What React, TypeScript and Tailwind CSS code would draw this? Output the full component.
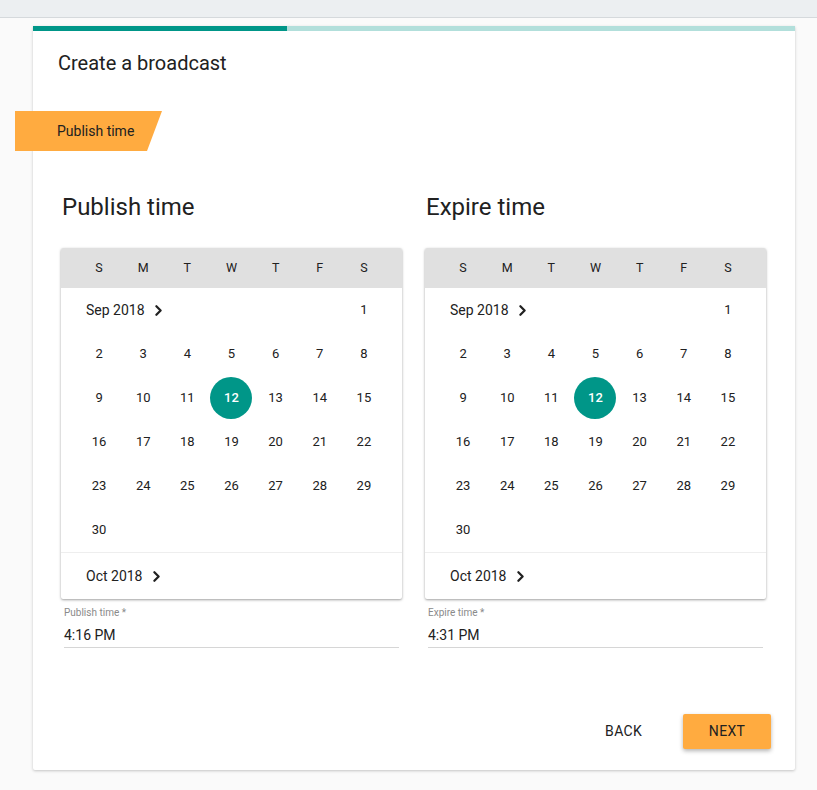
import { ChevronRight } from "lucide-react";

const WEEKDAYS = ["S", "M", "T", "W", "T", "F", "S"];

// Sep 2018 starts on a Saturday
const SEP_WEEKS: (number | null)[][] = [
  [null, null, null, null, null, null, 1],
  [2, 3, 4, 5, 6, 7, 8],
  [9, 10, 11, 12, 13, 14, 15],
  [16, 17, 18, 19, 20, 21, 22],
  [23, 24, 25, 26, 27, 28, 29],
  [30, null, null, null, null, null, null],
];

function MonthLabel({ label }: { label: string }) {
  return (
    <div className="flex items-center gap-[5px] text-[14px] text-[#212121]">
      <span>{label}</span>
      <ChevronRight size={17} strokeWidth={3.2} className="text-[#212121]" />
    </div>
  );
}

function Calendar({ selected }: { selected: number }) {
  return (
    <div className="w-[341px] bg-white rounded-[2px] shadow-[0_1px_3px_rgba(0,0,0,0.25),0_1px_2px_rgba(0,0,0,0.15)] overflow-hidden">
      <div className="h-10 bg-[#e0e0e0] px-4 grid grid-cols-7 items-center text-[12.5px] text-[#212121]">
        {WEEKDAYS.map((d, i) => (
          <span key={i} className="text-center">
            {d}
          </span>
        ))}
      </div>
      <div className="px-4">
        {SEP_WEEKS.map((week, wi) => (
          <div key={wi} className="relative grid grid-cols-7 h-11 items-center text-[13px] text-[#212121]">
            {wi === 0 && (
              <div className="absolute left-[9px] top-0 h-11 flex items-center">
                <MonthLabel label="Sep 2018" />
              </div>
            )}
            {week.map((d, di) => (
              <div key={di} className="flex items-center justify-center">
                {d === selected ? (
                  <span className="w-[42px] h-[42px] rounded-full bg-[#009688] text-white font-medium flex items-center justify-center">
                    {d}
                  </span>
                ) : (
                  <span>{d ?? ""}</span>
                )}
              </div>
            ))}
          </div>
        ))}
      </div>
      <div className="border-t border-[#eeeeee] h-[47px] flex items-center pl-[25px]">
        <MonthLabel label="Oct 2018" />
      </div>
    </div>
  );
}

function TimeField({ label, value }: { label: string; value: string }) {
  return (
    <div className="mt-[8px] mx-[3px] border-b border-[#d6d6d6] pb-[2px]">
      <div className="text-[10px] leading-3 text-[#8a8a8a]">{label} *</div>
      <div className="mt-[6px] text-[14px] leading-5 text-[#212121]">{value}</div>
    </div>
  );
}

function Column({ title, selected, field, value }: { title: string; selected: number; field: string; value: string }) {
  return (
    <div className="w-[341px]">
      <h2 className="pl-[1px] text-[24px] leading-8 text-[#212121] mb-[25px]">{title}</h2>
      <Calendar selected={selected} />
      <TimeField label={field} value={value} />
    </div>
  );
}

export default function App() {
  return (
    <div className="min-h-[790px] bg-[#fafafa] font-['Roboto',sans-serif]">
      <div className="h-[18px] bg-[#eceff1] border-b border-[#d5d9dc]" />
      <div className="px-[33px] pt-[8px]">
        <div className="w-[762px] bg-white shadow-[0_1px_3px_rgba(0,0,0,0.22)] rounded-b-[2px]">
          <div className="flex h-[5px]">
            <div className="w-[254px] bg-[#009688]" />
            <div className="flex-1 bg-[#b2dfdb]" />
          </div>
          <h1 className="pl-[25px] pt-[18px] text-[20px] leading-7 text-[#212121]">Create a broadcast</h1>
          <div className="-ml-[18px] mt-[34px] relative w-[147px] h-10">
            <svg className="absolute inset-0" width="147" height="40" viewBox="0 0 147 40">
              <polygon points="0,0 147,0 132,40 0,40" fill="#ffab40" />
            </svg>
            <span className="relative flex h-10 items-center pl-[42px] text-[14px] text-[#212121]">
              Publish time
            </span>
          </div>
          <div className="flex gap-[23px] pl-[28px] pr-[29px] pt-[40px]">
            <Column title="Publish time" selected={12} field="Publish time" value="4:16 PM" />
            <Column title="Expire time" selected={12} field="Expire time" value="4:31 PM" />
          </div>
          <div className="flex justify-end items-center gap-[25px] pr-[24px] pt-[65px] pb-[21px]">
            <button className="h-9 px-4 text-[14px] uppercase text-[#212121] tracking-[0.3px]">Back</button>
            <button className="w-[88px] h-[35px] rounded-[2px] bg-[#ffab40] text-[14px] uppercase text-[#212121] tracking-[0.3px] shadow-[0_2px_4px_rgba(0,0,0,0.3)]">
              Next
            </button>
          </div>
        </div>
      </div>
    </div>
  );
}
